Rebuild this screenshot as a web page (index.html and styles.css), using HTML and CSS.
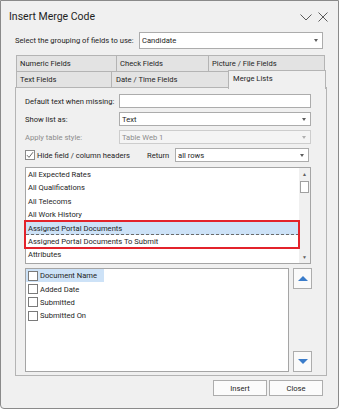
FILE: index.html
```html
<!DOCTYPE html>
<html lang="en">
<head>
  <meta charset="UTF-8" />
  <title>Insert Merge Code</title>
  <link rel="stylesheet" href="styles.css">
</head>
<body>
  <div class="window">
    <div class="titlebar">
      <span class="title">Insert Merge Code</span>
      <span class="tb-icons">
        <svg class="tb-chevron" width="12" height="7" viewBox="0 0 12 7"><polyline points="0.5,0.5 6,6 11.5,0.5" fill="none" stroke="#5a5a5a" stroke-width="1"/></svg>
        <svg class="tb-close" width="10" height="10" viewBox="0 0 10 10"><path d="M0.5 0.5 L9.5 9.5 M9.5 0.5 L0.5 9.5" stroke="#5a5a5a" stroke-width="1"/></svg>
      </span>
    </div>

    <div class="grouping">
      <span class="grouping-label">Select the grouping of fields to use:</span>
      <div class="combo combo-group"><span>Candidate</span><i class="arrow"></i></div>
    </div>

    <div class="tabs">
      <div class="tab-row">
        <div class="tab tab-numeric">Numeric Fields</div>
        <div class="tab tab-check">Check Fields</div>
        <div class="tab tab-picture">Picture / File Fields</div>
      </div>
      <div class="tab-row second">
        <div class="tab tab-text">Text Fields</div>
        <div class="tab tab-date">Date / Time Fields</div>
        <div class="tab tab-merge active">Merge Lists</div>
      </div>
    </div>

    <div class="panel">
      <div class="form-row">
        <span class="label">Default text when missing:</span>
        <div class="textbox"></div>
      </div>
      <div class="form-row">
        <span class="label">Show list as:</span>
        <div class="combo combo-form"><span>Text</span><i class="arrow"></i></div>
      </div>
      <div class="form-row disabled">
        <span class="label">Apply table style:</span>
        <div class="combo combo-form"><span>Table Web 1</span><i class="arrow"></i></div>
      </div>
      <div class="form-row">
        <span class="check checked">
          <svg width="8" height="8" viewBox="0 0 8 8"><polyline points="1,4.2 3,6.4 7,1.2" fill="none" stroke="#555" stroke-width="0.9"/></svg>
        </span>
        <span class="check-label">Hide field / column headers</span>
        <span class="return-label">Return</span>
        <div class="combo combo-return"><span>all rows</span><i class="arrow"></i></div>
      </div>

      <div class="listbox lists">
        <div class="items">
          <div class="item">All Expected Rates</div>
          <div class="item">All Qualifications</div>
          <div class="item">All Telecoms</div>
          <div class="item">All Work History</div>
          <div class="item selected">Assigned Portal Documents</div>
          <div class="item">Assigned Portal Documents To Submit</div>
          <div class="item">Attributes</div>
        </div>
        <div class="scrollbar">
          <div class="sb-btn">&#9650;</div>
          <div class="sb-thumb"></div>
          <div class="sb-track"></div>
          <div class="sb-btn">&#9660;</div>
        </div>
        <div class="highlight-box"></div>
      </div>

      <div class="fields-area">
        <div class="listbox fields">
          <div class="field-row selected"><span class="check"></span><span>Document Name</span></div>
          <div class="field-row"><span class="check"></span><span>Added Date</span></div>
          <div class="field-row"><span class="check"></span><span>Submitted</span></div>
          <div class="field-row"><span class="check"></span><span>Submitted On</span></div>
        </div>
        <div class="move-buttons">
          <div class="move-btn"><i class="tri up"></i></div>
          <div class="move-btn"><i class="tri down"></i></div>
        </div>
      </div>
    </div>

    <div class="footer">
      <button class="btn">Insert</button>
      <button class="btn">Close</button>
    </div>
  </div>
</body>
</html>
```

FILE: styles.css
```css
body {
  margin: 0;
  padding: 0;
  background: #ffffff;
}
.window {
  width: 339px;
  height: 409px;
  box-sizing: border-box;
  border: 1px solid #8a8a8a;
  border-radius: 0 0 4px 4px;
  background: #f0f0f0;
  font-family: Roboto, "Liberation Sans", Arial, sans-serif;
  font-size: 7.6px;
  color: #1e1e1e;
  white-space: nowrap;
}
.titlebar {
  height: 31px;
  display: flex;
  align-items: center;
  padding-left: 8px;
}
.title {
  font-size: 10.5px;
  flex: 1;
}
.tb-icons {
  display: flex;
  align-items: center;
  gap: 6px;
  margin-right: 10px;
}
.tb-chevron { margin-top: 1px; }

.grouping {
  display: flex;
  align-items: center;
  height: 16px;
  margin-left: 14px;
}
.grouping-label {
  width: 124px;
}
.combo {
  box-sizing: border-box;
  display: flex;
  align-items: center;
  justify-content: space-between;
  background: #fff;
  border: 1px solid #acacac;
  padding: 0 4px 0 2px;
}
.combo-group {
  width: 184px;
  height: 17px;
}
.arrow {
  width: 0;
  height: 0;
  border-top: 3px solid #5e5e5e;
  border-left: 2.5px solid transparent;
  border-right: 2.5px solid transparent;
}

.tabs {
  margin-top: 7px;
  margin-left: 15px;
}
.tab-row {
  display: flex;
  height: 17px;
}
.tab-row.second {
  margin-top: -1px;
}
.tab {
  box-sizing: border-box;
  height: 17px;
  border: 1px solid #b4b4b4;
  background: #e3e3e3;
  padding-left: 3px;
  display: flex;
  align-items: center;
  margin-right: -1px;
}
.tab-numeric { width: 101px; }
.tab-check { width: 93px; }
.tab-picture { width: 117px; }
.tab-text { width: 96px; }
.tab-date { width: 118px; padding-left: 4px; }
.tab-merge { width: 98px; }
.tab.active {
  background: #f0f0f0;
  border-bottom: none;
  height: 19px;
  margin-top: -1px;
  padding-left: 4px;
  align-items: flex-start;
  padding-top: 3px;
  position: relative;
  z-index: 1;
}

.panel {
  box-sizing: border-box;
  width: 312px;
  height: 289px;
  margin-left: 14px;
  margin-top: -1px;
  border: 1px solid #b4b4b4;
  padding: 6px 0 0 9px;
}
.form-row {
  display: flex;
  align-items: center;
  height: 14px;
  margin-bottom: 4px;
}
.label {
  width: 94px;
}
.textbox {
  box-sizing: border-box;
  width: 192px;
  height: 14px;
  background: #fff;
  border: 1px solid #acacac;
}
.combo-form {
  width: 192px;
  height: 14px;
}
.form-row.disabled .label,
.form-row.disabled .combo span {
  color: #8c8c8c;
}
.form-row.disabled .combo {
  background: #f4f4f4;
  border-color: #cdcdcd;
}
.form-row.disabled .arrow {
  border-top-color: #b0b0b0;
}
.check {
  box-sizing: border-box;
  width: 10px;
  height: 10px;
  background: #fff;
  border: 1px solid #7a7a7a;
  display: flex;
  align-items: center;
  justify-content: center;
  flex-shrink: 0;
}
.check.checked {
  border-color: #8a8a8a;
}
.check-label {
  margin-left: 2px;
  width: 110px;
}
.return-label {
  width: 28px;
}
.combo-return {
  width: 134px;
  height: 14px;
}

.listbox {
  box-sizing: border-box;
  background: #fff;
  border: 1px solid #a5a5a5;
}
.lists {
  position: relative;
  display: flex;
  width: 286px;
  height: 97px;
  margin-top: 5px;
}
.items {
  flex: 1;
}
.item {
  height: 13.4px;
  line-height: 13.4px;
  padding-left: 2px;
  box-sizing: border-box;
}
.item.selected {
  background: #cde2f7;
  border-bottom: 1px dashed #6a6a6a;
}
.scrollbar {
  width: 11px;
  display: flex;
  flex-direction: column;
  background: #f0f0f0;
}
.sb-btn {
  height: 12px;
  font-size: 5px;
  color: #606060;
  display: flex;
  align-items: center;
  justify-content: center;
}
.sb-thumb {
  box-sizing: border-box;
  height: 12px;
  margin: 1px 1px 0 1px;
  background: #fff;
  border: 1px solid #a0a0a0;
}
.sb-track {
  flex: 1;
}
.highlight-box {
  position: absolute;
  left: -2px;
  top: 52px;
  width: 276px;
  height: 29px;
  box-sizing: border-box;
  border: 2px solid #e3232b;
}

.fields-area {
  display: flex;
  margin-top: 4px;
}
.fields {
  width: 264px;
  height: 104px;
}
.field-row {
  display: flex;
  align-items: center;
  height: 13.4px;
  width: fit-content;
  padding-left: 2px;
  padding-right: 7px;
}
.field-row .check {
  margin-right: 2px;
}
.field-row.selected {
  background: #cde2f7;
}
.move-buttons {
  display: flex;
  flex-direction: column;
  justify-content: space-between;
  margin-left: 4px;
  height: 104px;
}
.move-btn {
  box-sizing: border-box;
  width: 19px;
  height: 21px;
  background: #fafafa;
  border: 1px solid #adadad;
  display: flex;
  align-items: center;
  justify-content: center;
}
.tri {
  width: 0;
  height: 0;
  border-left: 5px solid transparent;
  border-right: 5px solid transparent;
}
.tri.up { border-bottom: 5px solid #3a7cca; }
.tri.down { border-top: 5px solid #3a7cca; }

.footer {
  display: flex;
  justify-content: flex-end;
  gap: 2px;
  margin-top: 4px;
  margin-right: 15px;
}
.btn {
  box-sizing: border-box;
  width: 54px;
  height: 16px;
  padding: 0;
  background: #fbfbfb;
  border: 1px solid #adadad;
  font-family: Roboto, "Liberation Sans", Arial, sans-serif;
  font-size: 7.6px;
  color: #1e1e1e;
}
```
